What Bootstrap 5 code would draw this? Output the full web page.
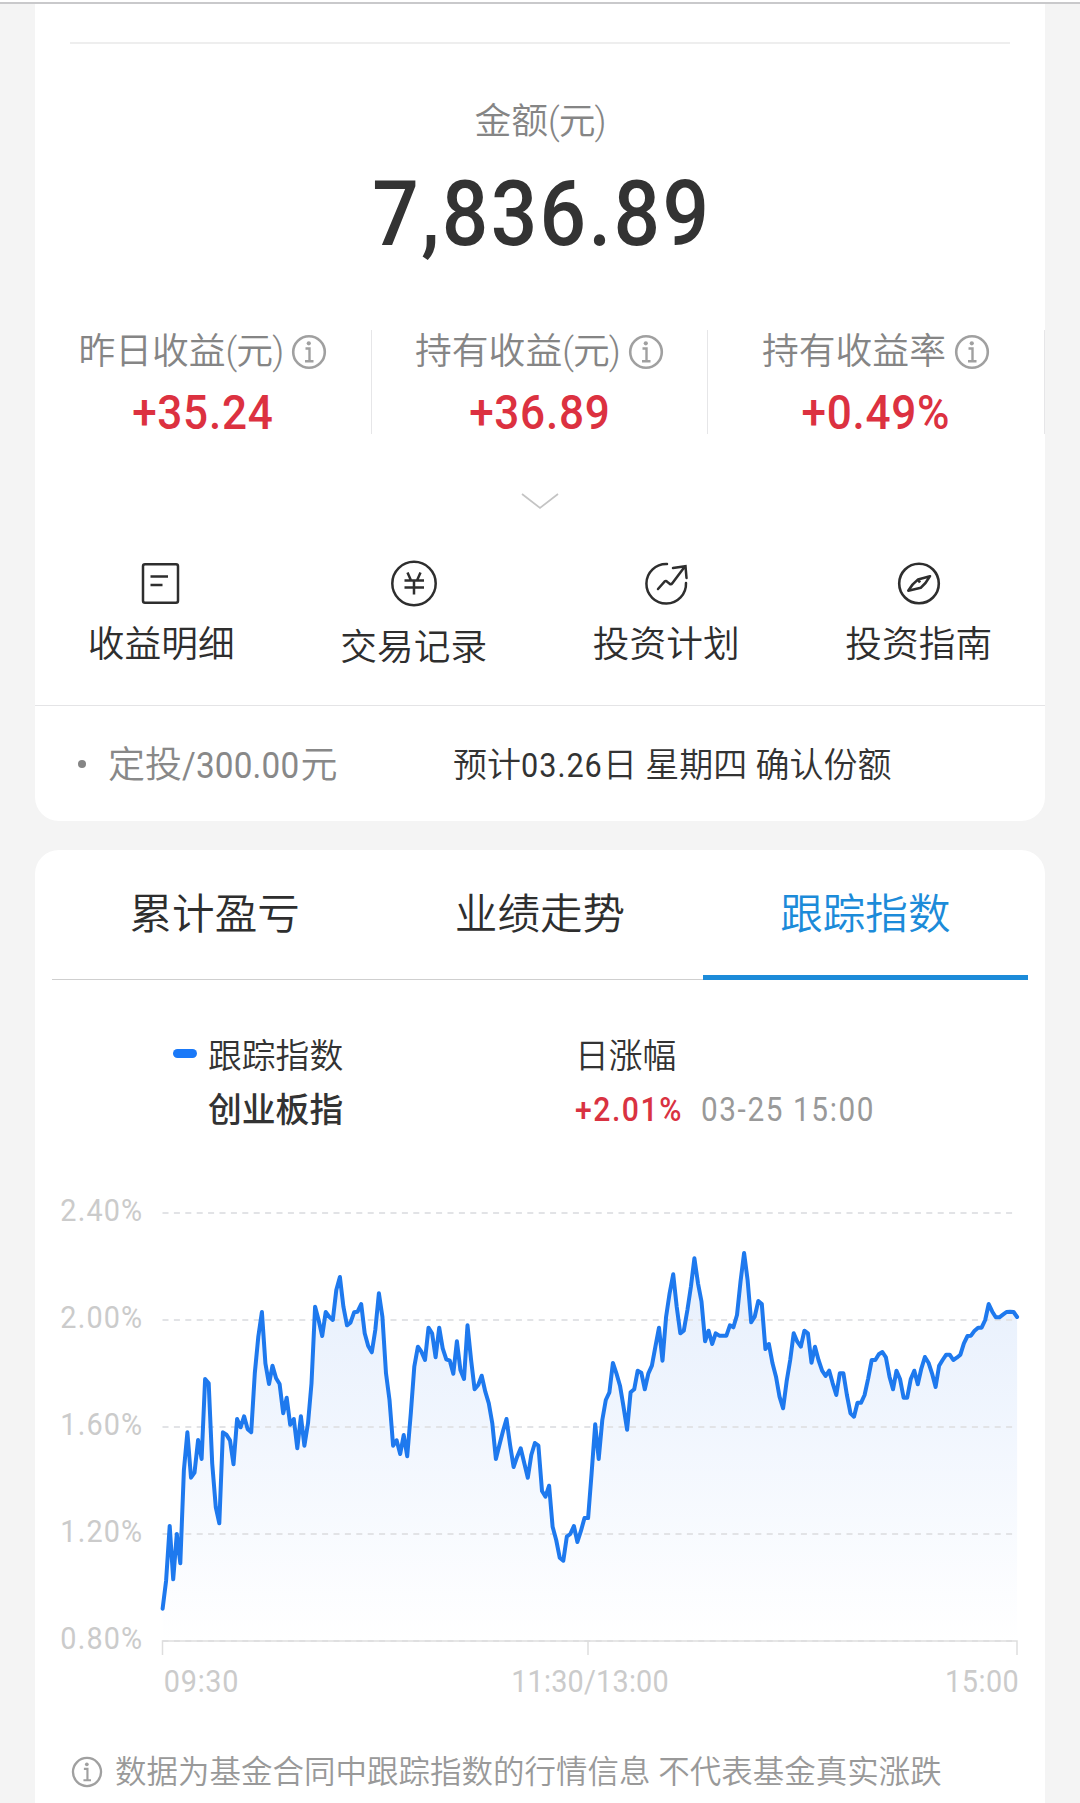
<!DOCTYPE html>
<html lang="zh-CN">
<head>
<meta charset="utf-8">
<meta name="viewport" content="width=device-width, initial-scale=1">
<title>基金持仓</title>
<link href="https://cdn.jsdelivr.net/npm/bootstrap@5.3.0/dist/css/bootstrap.min.css" rel="stylesheet">
<style>
  body { background: #f4f4f4; color: #2e2e2e; font-family: Roboto, "Noto Sans CJK SC", sans-serif; font-weight: 350; line-height: 1; overflow: hidden; height: 1803px; }
  .topline { height: 4px; background: #fff; border-bottom: 2px solid #c9c9cb; }
  .panel { width: 1010px; background: #fff; }
  .panel-a { height: 817px; border-radius: 0 0 24px 24px; }
  .panel-b { height: 953px; margin-top: 29px; border-radius: 24px 24px 0 0; padding: 0 17px; }
  .rule { height: 2px; background: #eee; margin: 38px 35px 0; }
  .cap { font-size: 36.8px; color: #858585; line-height: 44px; white-space: nowrap; }
  .paren { letter-spacing: -1px; }
  .total { font-size: 91px; font-weight: 500; line-height: 90px; letter-spacing: 2.6px; color: #333; margin-top: 25px; padding-left: 4px; transform: scaleX(.9); }
  .stats { height: 104px; margin-top: 71px; }
  .stat { width: 336.6px; border-right: 1px solid #e6e6e8; }
  .stat svg { margin: -1px 0 0 8px; }
  .gain { font-size: 49px; font-weight: 500; color: #dc3140; letter-spacing: .8px; line-height: 56px; margin-top: 11px; transform: scaleX(.9); }
  .chev { margin-top: 58px; height: 18px; }
  .quick { margin-top: 48px; height: 148px; font-size: 36.7px; border-bottom: 1px solid #e4e4e6; }
  .quick > div { width: 25%; }
  .quick span { line-height: 44px; margin-top: 15px; }
  .plan { height: 118px; padding-left: 43px; font-size: 37px; color: #888; }
  .bullet { width: 8px; height: 8px; background: #858585; margin-right: 22px; margin-top: -3px; }
  .num, .rate, .when { display: inline-block; transform: scaleX(.9); transform-origin: left; }
  .num, .when { font-weight: 400; }
  .amount { letter-spacing: .2px; margin-right: -12px; }
  .day { letter-spacing: 1.1px; margin-right: -9px; }
  .plan-note { font-size: 34px; color: #333; left: 418px; white-space: nowrap; }
  .tabs { height: 130px; font-size: 42.6px; }
  .tabs > div { flex: 1; line-height: 128px; height: 130px; border-bottom: 1px solid #cfcfcf; text-align: center; }
  .tabs > .on { color: #1c8bd9; border-bottom: 5px solid #1c8bd9; }
  .legend { margin-top: 50px; height: 106px; font-size: 33.8px; color: #333; }
  .legend .line { line-height: 54px; white-space: nowrap; }
  .pill { width: 24px; height: 9px; border-radius: 5px; background: #1a79f8; margin: -7px 11px 0 121px; }
  .lg-left { width: 523px; }
  .rate { color: #d93241; font-weight: 500; font-size: 33.5px; letter-spacing: 1.7px; margin-top: -1px; }
  .when { color: #999; font-size: 33px; letter-spacing: 1.8px; margin: -1px 0 0 6px; }
  .chart { margin-left: -17px; display: block; }
  .chart text { font-size: 32px; fill: #cbcbcb; font-weight: 400; }
  .foot { font-size: 31.5px; color: #999; padding-left: 19px; margin-top: 2px; line-height: 44px; white-space: nowrap; }
  .foot svg { margin: -3px 12px 0 0; }
</style>
<script src="https://cdn.jsdelivr.net/npm/bootstrap@5.3.0/dist/js/bootstrap.bundle.min.js"></script>
</head>
<body>
<svg width="0" height="0" class="position-absolute">
  <symbol id="info" viewBox="0 0 36 36"><g fill="none" stroke="currentColor"><circle cx="18" cy="18" r="15.8" stroke-width="2.6"/><path d="M14.5 14.5H18.5V27M14 27.3H22.5" stroke-width="2.4"/></g><circle cx="17.8" cy="9.3" r="2.1" fill="currentColor"/></symbol>
</svg>
<div class="topline"></div>
<main class="d-flex flex-column align-items-center">
  <section class="panel panel-a">
    <div class="rule"></div>
    <div class="text-center">
      <div class="cap" style="margin-top:56px">金额<span class="paren">(元)</span></div>
      <div class="total">7,836.89</div>
    </div>
    <div class="stats d-flex">
      <div class="stat text-center"><div class="cap d-flex justify-content-center align-items-center">昨日收益<span class="paren">(元)</span><svg width="36" height="36" color="#a0a0a0"><use href="#info"/></svg></div><div class="gain">+35.24</div></div>
      <div class="stat text-center"><div class="cap d-flex justify-content-center align-items-center">持有收益<span class="paren">(元)</span><svg width="36" height="36" color="#a0a0a0"><use href="#info"/></svg></div><div class="gain">+36.89</div></div>
      <div class="stat text-center"><div class="cap d-flex justify-content-center align-items-center">持有收益率<svg width="36" height="36" color="#a0a0a0"><use href="#info"/></svg></div><div class="gain">+0.49%</div></div>
    </div>
    <div class="chev d-flex justify-content-center"><svg width="40" height="18" fill="none" stroke="#c4c4c4" stroke-width="1.7"><path d="M2 2 20 16 38 2"/></svg></div>
    <div class="quick d-flex">
      <div class="d-flex flex-column align-items-center"><svg width="50" height="50" fill="none" stroke="#2e2e2e" stroke-width="2.5"><rect x="7" y="6.3" width="35" height="38.5" rx="2"/><path d="M14.5 18.5H32M14.5 27H26.5"/></svg><span>收益明细</span></div>
      <div class="d-flex flex-column align-items-center"><svg width="50" height="50" fill="none" stroke="#2e2e2e" stroke-width="2.5"><circle cx="25" cy="25.5" r="21.7"/><path d="M18.5 14.5 22 22.5M31.5 14.5 28 22.5M15.5 22.5H35M15.5 29.5H35M25 22.5V36.5"/></svg><span style="margin-top:18px">交易记录</span></div>
      <div class="d-flex flex-column align-items-center"><svg width="50" height="50" fill="none" stroke="#2e2e2e" stroke-width="2.5" stroke-linecap="round"><path d="M26 6A19.8 19.8 0 1 0 45 25M17 31 23.5 23.6Q25 22.4 26 23.7L29.3 26.3Q30.5 26.5 31.5 25L43.5 9M32 10 44.5 8.2 45.5 20"/></svg><span>投资计划</span></div>
      <div class="d-flex flex-column align-items-center"><svg width="50" height="50" fill="none" stroke="#2e2e2e" stroke-width="2.6" stroke-linejoin="round"><circle cx="25" cy="25.5" r="19.8"/><path d="M36 18.2 24 21.5Q18 26 14.3 32.7L26.8 29.8Q32 25.5 36 18.2ZM24 21.5 26 24.5"/></svg><span>投资指南</span></div>
    </div>
    <div class="plan d-flex align-items-center position-relative">
      <i class="bullet rounded-circle"></i><span>定投<span class="num amount">/300.00</span>元</span>
      <span class="plan-note position-absolute">预计<span class="num day">03.26</span>日 星期四 确认份额</span>
    </div>
  </section>
  <section class="panel panel-b">
    <div class="tabs d-flex"><div>累计盈亏</div><div>业绩走势</div><div class="on">跟踪指数</div></div>
    <div class="legend d-flex">
      <div class="lg-left"><div class="line d-flex align-items-center"><i class="pill"></i>跟踪指数</div><div class="line" style="padding-left:156px;font-weight:500">创业板指</div></div>
      <div><div class="line">日涨幅</div><div class="line d-flex"><span class="rate">+2.01%</span><span class="when">03-25 15:00</span></div></div>
    </div>
    <svg class="chart" width="1010" height="613" viewBox="35 1136 1010 613">
      <defs><linearGradient id="fade" gradientUnits="userSpaceOnUse" x1="0" y1="1253" x2="0" y2="1641"><stop offset="0" stop-color="#e6effc"/><stop offset=".45" stop-color="#f1f6fe"/><stop offset="1" stop-color="#fff"/></linearGradient></defs>
      <path id="area" fill="url(#fade)"/>
      <path stroke="#e2e3e6" stroke-width="1.8" stroke-dasharray="6 5.4" d="M162.5 1213H1014M162.5 1320H1014M162.5 1427H1014M162.5 1534H1014M162.5 1641H1017"/>
      <path d="M162.5 1655V1641H1017V1655M588 1641V1655" fill="none" stroke="#dedede" stroke-width="1.5"/>
      <path id="trend" fill="none" stroke="#1e79ee" stroke-width="4" stroke-linejoin="round" stroke-linecap="round"/>
      <g transform="scale(.9 1)">
        <text x="67" y="1221" textLength="91">2.40%</text><text x="67" y="1328" textLength="91">2.00%</text><text x="67" y="1435" textLength="91">1.60%</text><text x="67" y="1542" textLength="91">1.20%</text><text x="67" y="1649" textLength="91">0.80%</text>
        <text x="182" y="1692" textLength="83">09:30</text><text x="568" y="1692" textLength="175">11:30/13:00</text><text x="1050" y="1692" textLength="82">15:00</text>
      </g>
    </svg>
    <div class="foot d-flex align-items-center"><svg width="32" height="32" color="#a0a0a0"><use href="#info"/></svg>数据为基金合同中跟踪指数的行情信息 不代表基金真实涨跌</div>
  </section>
</main>
<script>
  // Samples across the trading day; heights are thirds of a pixel below y = 1200.
  const series = [1226,1142,978,1138,1002,1090,810,697,833,818,720,777,537,550,790,922,970,697,704,721,793,657,682,649,688,697,520,410,336,490,552,497,535,552,640,593,674,657,745,649,737,670,550,320,360,408,336,350,360,270,231,320,376,368,337,335,312,400,438,457,390,280,350,520,600,737,721,762,705,769,640,500,440,455,480,383,400,472,383,445,478,482,521,424,510,537,376,480,568,555,527,575,610,670,777,735,693,657,735,801,770,745,790,833,765,729,737,873,890,857,980,1020,1073,1082,1010,1002,978,1026,992,954,954,820,673,777,660,600,577,489,520,557,620,689,577,568,512,518,568,520,497,440,383,482,350,280,223,320,400,392,330,260,175,250,305,424,392,432,400,407,407,407,376,382,345,245,159,240,367,350,303,312,447,432,490,530,590,625,545,480,400,425,440,392,400,488,440,480,512,528,512,550,585,520,520,585,640,650,608,608,585,535,480,480,463,456,472,530,568,512,538,593,593,538,512,553,505,471,488,520,561,497,480,464,464,480,473,464,430,408,407,392,383,383,360,312,335,352,352,344,336,335,336,351];
  const step = 854.5 / (series.length - 1);
  const line = "M" + series.map((v, i) => (162.6 + i * step).toFixed(1) + " " + (1200 + v / 3).toFixed(1)).join("L");
  document.getElementById("trend").setAttribute("d", line);
  document.getElementById("area").setAttribute("d", line + "V1641H162.6Z");
</script>
</body>
</html>
